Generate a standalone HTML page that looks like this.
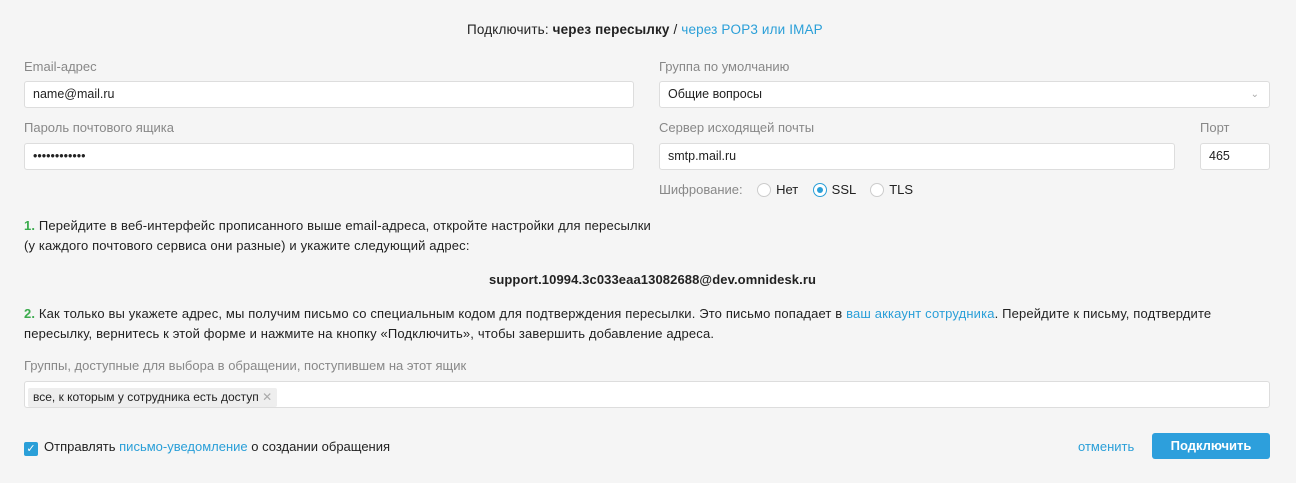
<!DOCTYPE html>
<html><head><meta charset="utf-8"><style>
*{box-sizing:border-box;margin:0;padding:0}
body{width:1296px;height:483px;background:#f5f5f5;font-family:"Liberation Sans",sans-serif;font-size:13px;color:#222;position:relative;overflow:hidden;letter-spacing:0}
.a{position:absolute;white-space:nowrap}
.lbl{color:#888}
.inp{position:absolute;background:#fff;border:1px solid #ddd;border-radius:3px;height:27px;padding:0 8px;line-height:25px;font-size:12.5px;color:#222}
a{color:#2a9fd8;text-decoration:none}
.g{color:#3bab4d;font-weight:bold}
.r{display:inline-block;width:14px;height:14px;border:1px solid #ccc;border-radius:50%;background:#fff;vertical-align:-3px;margin-right:5px;position:relative}
.r.on{border-color:#2a9fd8}
.r.on:after{content:"";position:absolute;left:3px;top:3px;width:6px;height:6px;border-radius:50%;background:#2a9fd8}
</style></head><body>
<div class="a" style="left:467px;top:22px;font-size:13.5px;letter-spacing:0.15px">Подключить: <b>через пересылку</b> / <a>через POP3 или IMAP</a></div>
<div class="a lbl" style="left:24px;top:59px">Email-адрес</div>
<div class="inp" style="left:24px;top:81px;width:610px">name@mail.ru</div>
<div class="a lbl" style="left:24px;top:120px">Пароль почтового ящика</div>
<div class="inp" style="left:24px;top:143px;width:610px">••••••••••••</div>
<div class="a lbl" style="left:659px;top:59px">Группа по умолчанию</div>
<div class="inp" style="left:659px;top:81px;width:611px">Общие вопросы<span style="position:absolute;right:10px;top:0;color:#aaa;font-size:10px">&#8964;</span></div>
<div class="a lbl" style="left:659px;top:120px">Сервер исходящей почты</div>
<div class="inp" style="left:659px;top:143px;width:516px">smtp.mail.ru</div>
<div class="a lbl" style="left:1200px;top:120px">Порт</div>
<div class="inp" style="left:1200px;top:143px;width:70px">465</div>
<div class="a" style="left:659px;top:182px"><span class="lbl">Шифрование:</span> &nbsp; &nbsp;<span class="r"></span>Нет &nbsp; &nbsp;<span class="r on"></span>SSL &nbsp; &nbsp;<span class="r"></span>TLS</div>
<div class="a" style="left:24px;top:216px;line-height:20px;letter-spacing:0.15px"><span class="g">1.</span> Перейдите в веб-интерфейс прописанного выше email-адреса, откройте настройки для пересылки<br>(у каждого почтового сервиса они разные) и укажите следующий адрес:</div>
<div class="a" style="left:489px;top:272px;font-weight:bold;letter-spacing:0.1px">support.10994.3c033eaa13082688@dev.omnidesk.ru</div>
<div class="a" style="left:24px;top:304px;line-height:20px;letter-spacing:0.15px"><span class="g">2.</span> Как только вы укажете адрес, мы получим письмо со специальным кодом для подтверждения пересылки. Это письмо попадает в <a>ваш аккаунт сотрудника</a>. Перейдите к письму, подтвердите<br>пересылку, вернитесь к этой форме и нажмите на кнопку «Подключить», чтобы завершить добавление адреса.</div>
<div class="a lbl" style="left:24px;top:358px">Группы, доступные для выбора в обращении, поступившем на этот ящик</div>
<div class="inp" style="left:24px;top:381px;width:1246px;height:27px;padding:3px">
<span style="display:inline-block;background:#eee;border-radius:2px;padding:0 5px;line-height:19px;font-size:12px">все, к которым у сотрудника есть доступ <span style="color:#aaa">✕</span></span></div>
<div class="a" style="left:24px;top:439px"><span style="display:inline-block;width:14px;height:14px;background:#2a9fd8;border-radius:2px;color:#fff;font-size:11px;line-height:14px;text-align:center;vertical-align:-1px;margin-right:6px">✓</span>Отправлять <a>письмо-уведомление</a> о создании обращения</div>
<div class="a" style="left:1078px;top:439px"><a>отменить</a></div>
<div class="a" style="left:1152px;top:433px;width:118px;height:26px;background:#2d9fdc;border-radius:3px;color:#fff;font-weight:bold;text-align:center;line-height:26px">Подключить</div>
</body></html>
